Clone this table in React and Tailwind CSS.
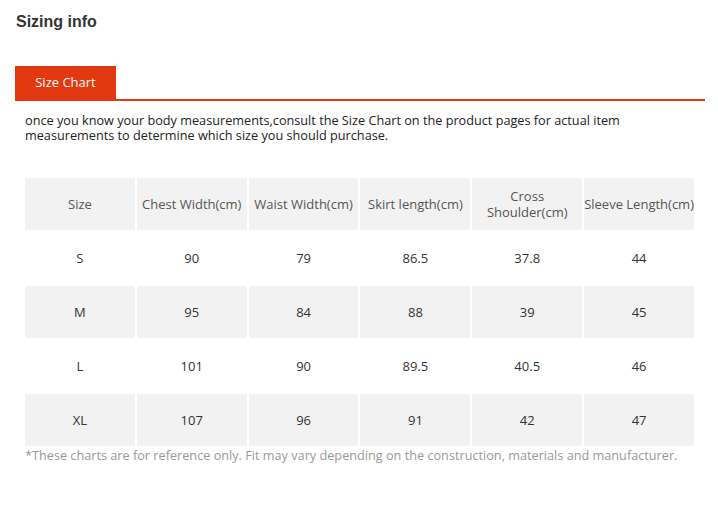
import React from "react";

const headers = [
  "Size",
  "Chest Width(cm)",
  "Waist Width(cm)",
  "Skirt length(cm)",
  "Cross Shoulder(cm)",
  "Sleeve Length(cm)",
];

const rows = [
  ["S", "90", "79", "86.5", "37.8", "44"],
  ["M", "95", "84", "88", "39", "45"],
  ["L", "101", "90", "89.5", "40.5", "46"],
  ["XL", "107", "96", "91", "42", "47"],
];

const App = () => {
  return (
    <div className="w-[718px] h-[525px] bg-white font-['Open_Sans',sans-serif]">
      {/* Title */}
      <h1 className="pl-4 pt-[13px] text-[16px] leading-[18px] font-bold text-[#333] font-['Liberation_Sans',Arial,sans-serif]">
        Sizing info
      </h1>

      {/* Tabs */}
      <div className="ml-[15px] mr-[13px] mt-[35px] flex border-b-2 border-[#e2380f]">
        <div className="w-[101px] h-[33px] bg-[#e2380f] text-white text-[13px] flex items-center justify-center">
          Size Chart
        </div>
      </div>

      {/* Intro text */}
      <p className="ml-[25px] mt-[12px] w-[640px] text-[12.7px] leading-[15px] text-[#222]">
        once you know your body measurements,consult the Size Chart on the
        product pages for actual item measurements to determine which size you
        should purchase.
      </p>

      {/* Size table */}
      <table className="ml-[23px] mt-[33px] w-[673px] table-fixed border-separate border-spacing-[2px] text-[13px] text-center">
        <thead>
          <tr>
            {headers.map((h) => (
              <th
                key={h}
                className="h-[52px] bg-[#f2f2f2] font-normal text-[#555] leading-[16px] px-0"
              >
                {h === "Cross Shoulder(cm)" ? (
                  <>
                    Cross
                    <br />
                    Shoulder(cm)
                  </>
                ) : (
                  h
                )}
              </th>
            ))}
          </tr>
        </thead>
        <tbody>
          {rows.map((row, i) => (
            <tr key={row[0]}>
              {row.map((cell, j) => (
                <td
                  key={j}
                  className={`h-[52px] pt-[1px] text-[#333] ${
                    i % 2 === 1 ? "bg-[#f2f2f2]" : "bg-white"
                  }`}
                >
                  {cell}
                </td>
              ))}
            </tr>
          ))}
        </tbody>
      </table>

      {/* Footnote */}
      <p className="ml-[25px] mt-0 text-[12.7px] leading-[14px] text-[#999]">
        *These charts are for reference only. Fit may vary depending on the
        construction, materials and manufacturer.
      </p>
    </div>
  );
};

export default App;
